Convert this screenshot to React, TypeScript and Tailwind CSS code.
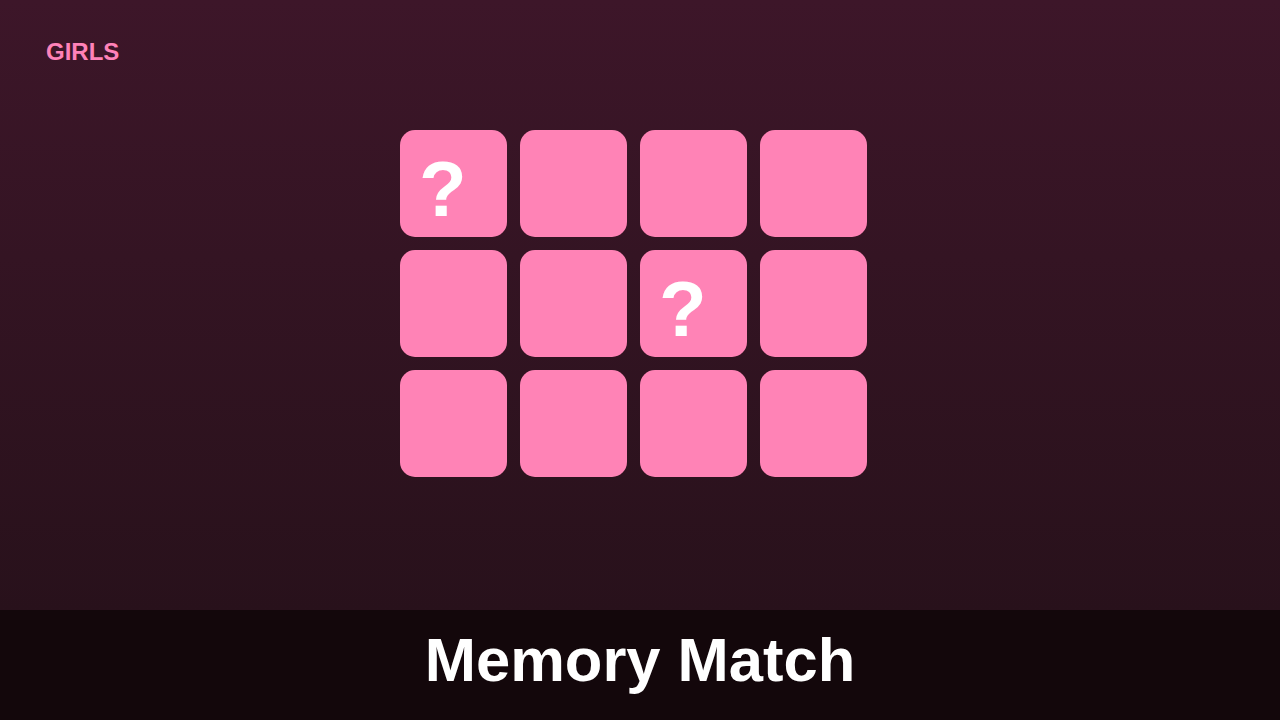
const cards = [true, false, false, false, false, false, true, false, false, false, false, false];

export default function App() {
  return (
    <div
      className="w-[1280px] h-[720px] flex flex-col overflow-hidden"
      style={{ fontFamily: '"Liberation Sans", Arial, sans-serif' }}
    >
      <div className="flex-1 flex flex-col bg-gradient-to-b from-[#3d1629] to-[#28111b]">
        <div className="pt-[36px] pl-[46px] text-[24px] leading-[32px] font-bold text-[#ff82b8]">GIRLS</div>
        <div className="flex justify-center pt-[62px] pr-[13px]">
          <div className="grid grid-cols-4 gap-[13px]">
            {cards.map((shown, i) => (
              <div key={i} className="w-[107px] h-[107px] rounded-[15px] bg-[#ff83b6] pl-[19px] pt-[20px]">
                {shown && <span className="block text-[78px] leading-none font-bold text-white">?</span>}
              </div>
            ))}
          </div>
        </div>
      </div>
      <div className="h-[110px] bg-[#13070b] flex justify-center pt-[19px]">
        <h1 className="text-[61.5px] leading-none font-bold text-white">Memory Match</h1>
      </div>
    </div>
  );
}
